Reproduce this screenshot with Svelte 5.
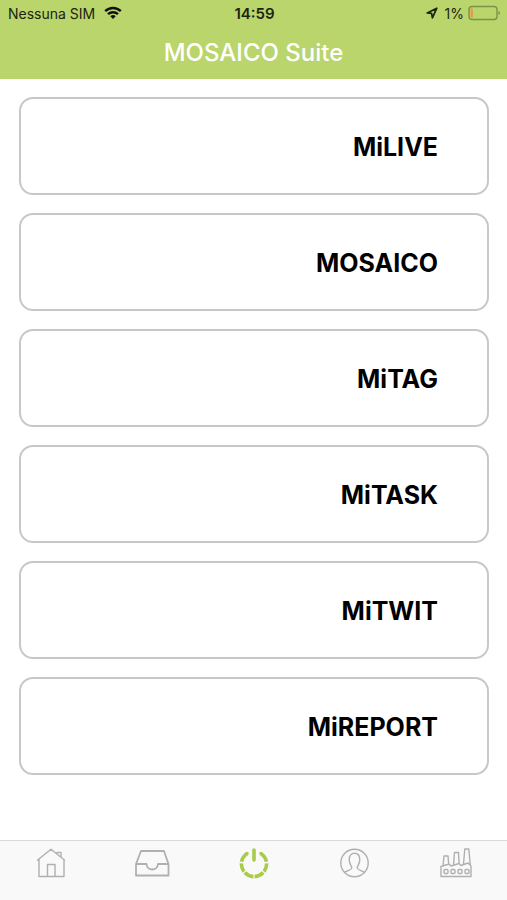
<script lang="ts">
  const apps = ["MiLIVE", "MOSAICO", "MiTAG", "MiTASK", "MiTWIT", "MiREPORT"];

  let activeTab = $state("power");
</script>

<div class="screen">
  <header>
    <div class="status">
      <div class="carrier">
        <span>Nessuna SIM</span>
        <svg class="wifi" width="18" height="14" viewBox="0 0 18 14" aria-hidden="true">
          <path d="M1.2 5.2a11.2 11.2 0 0 1 15.6 0" />
          <path d="M4 8.2a7.2 7.2 0 0 1 10 0" />
          <path class="solid" d="M6.3 10.3a4 4 0 0 1 5.4 0L9 13z" />
        </svg>
      </div>
      <time>14:59</time>
      <div class="power">
        <svg width="12" height="12" viewBox="0 0 12 12" aria-hidden="true">
          <path class="arrow" d="M10.800 1.200 1.200 6l4.400.4.8 4.400z" />
        </svg>
        <span>1%</span>
        <svg width="33" height="16" viewBox="0 0 33 16" aria-hidden="true">
          <rect class="shell" x="1" y="1.5" width="28" height="13" rx="3" />
          <rect class="level" x="2.5" y="3.5" width="2.5" height="9" rx="1" />
          <path class="cap" d="M30.5 6v4q1.5-.5 1.5-2t-1.5-2" />
        </svg>
      </div>
    </div>
    <h1>MOSAICO Suite</h1>
  </header>

  <main>
    {#each apps as app}
      <button class="card">{app}</button>
    {/each}
  </main>

  <nav>
    <button
      aria-label="Home"
      class:active={activeTab === "home"}
      onclick={() => (activeTab = "home")}
    >
      <svg width="36" height="32" viewBox="0 0 36 32">
        <path d="M4 13.5 18 2.2l14 11.3M6 12v17.5h25V12M14.5 29.5v-12H22v12M24 7V5.5h4v5" />
      </svg>
    </button>
    <button
      aria-label="Inbox"
      class:active={activeTab === "inbox"}
      onclick={() => (activeTab = "inbox")}
    >
      <svg width="36" height="32" viewBox="0 0 36 32">
        <path
          class="bold"
          d="M7 4h23l4.500 13v11.500H2V17zM2 17h10.500c.5 7.300 11 7.300 11.500 0h10.500"
        />
      </svg>
    </button>
    <button
      aria-label="Power"
      class:active={activeTab === "power"}
      onclick={() => (activeTab = "power")}
    >
      <svg width="36" height="32" viewBox="0 0 36 32">
        <path class="ring round" d="M18 3v10M11 6.500h0M25 6.500h0" />
        <path
          class="ring"
          d="M11.1 6.400A12.600 12.600 0 0 0 5.600 14.800M5.400 16.300A12.600 12.600 0 0 0 7.900 24.600M8.800 25.600A12.600 12.600 0 0 0 17.400 29.600M18.600 29.600A12.600 12.600 0 0 0 27.200 25.600M28.100 24.600A12.600 12.600 0 0 0 30.600 16.300M30.400 14.800A12.600 12.600 0 0 0 24.900 6.400"
        />
      </svg>
    </button>
    <button
      aria-label="Profile"
      class:active={activeTab === "profile"}
      onclick={() => (activeTab = "profile")}
    >
      <svg width="36" height="32" viewBox="0 0 36 32">
        <circle cx="17.500" cy="16" r="13.700" />
        <path
          d="M7.500 25.500c2-2 7-2.300 7.300-4.500.2-2-2.600-3.300-2.600-8.500 0-4 2-6.300 5.300-6.300s5.300 2.300 5.300 6.300c0 5.200-2.800 6.500-2.600 8.500.3 2.200 5.300 2.500 7.300 4.500"
        />
      </svg>
    </button>
    <button
      aria-label="Factory"
      class:active={activeTab === "factory"}
      onclick={() => (activeTab = "factory")}
    >
      <svg width="36" height="32" viewBox="0 0 36 32">
        <path
          d="M3 29.500V19.500l8-2.500 2 2 8-2.500 2 2 7-2.500 3 3v10.500zM5 18.500l1-9.500h4l.7 8M15.500 18l1-12.500h4l.6 11M25.500 17l1.300-15h4l1.500 16"
        />
        <rect x="6" y="22.500" width="4" height="4" rx="1" />
        <rect x="13" y="22.500" width="4" height="4" rx="1" />
        <rect x="20" y="22.500" width="4" height="4" rx="1" />
        <rect x="27" y="22.500" width="4" height="4" rx="1" />
      </svg>
    </button>
  </nav>
</div>

<style>
  :global(body) {
    margin: 0;
    background: #fff;
  }

  .screen {
    display: flex;
    flex-direction: column;
    min-height: 100vh;
    font-family: Inter, "Liberation Sans", sans-serif;
    color: #000;
  }

  header {
    background: #b9d56c;
    padding-bottom: 6px;
  }

  .status {
    display: grid;
    grid-template-columns: 1fr auto 1fr;
    align-items: center;
    height: 26px;
    padding: 0 6px 0 8px;
    font-size: 14px;
    color: #1c2410;
  }

  .carrier,
  .power {
    display: flex;
    align-items: center;
    gap: 9px;
  }

  .power {
    justify-content: flex-end;
    gap: 4px;
  }

  .power span {
    margin-left: 3px;
  }

  time {
    font-weight: 600;
    font-size: 15px;
  }

  .wifi path {
    fill: none;
    stroke: #111;
    stroke-width: 2.4;
  }

  .wifi .solid {
    fill: #111;
    stroke: none;
  }

  .arrow {
    fill: none;
    stroke: #1c2410;
    stroke-width: 1.7;
    stroke-linejoin: round;
  }

  .shell {
    fill: none;
    stroke: #7d9249;
    stroke-width: 1.4;
  }

  .level {
    fill: #e59a4c;
  }

  .cap {
    fill: #7d9249;
  }

  h1 {
    margin: 0;
    padding-top: 6px;
    font-size: 24px;
    font-weight: 500;
    line-height: 41px;
    text-align: center;
    color: #fff;
  }

  main {
    flex: 1;
    display: flex;
    flex-direction: column;
    gap: 18px;
    padding: 18px 18px 18px 19px;
  }

  .card {
    height: 98px;
    padding: 2px 49px 0;
    border: 2px solid #c8c8c8;
    border-radius: 14px;
    background: #fff;
    font: inherit;
    font-size: 25px;
    font-weight: 700;
    text-align: right;
    color: #000;
    cursor: pointer;
  }

  nav {
    display: flex;
    height: 60px;
    box-sizing: border-box;
    border-top: 1px solid #d8d8d8;
    background: #f9f9f9;
  }

  nav button {
    flex: 1;
    display: flex;
    justify-content: center;
    align-items: flex-start;
    padding: 6px 0 0;
    border: 0;
    background: none;
    color: #b0b0b0;
    cursor: pointer;
  }

  nav button.active {
    color: #a9cb4b;
  }

  nav svg {
    fill: none;
    stroke: currentColor;
    stroke-width: 1.4;
    stroke-linejoin: round;
  }

  nav .bold {
    stroke-width: 1.8;
  }

  nav .ring {
    stroke-width: 3.6;
  }

  nav .round {
    stroke-linecap: round;
  }
</style>
